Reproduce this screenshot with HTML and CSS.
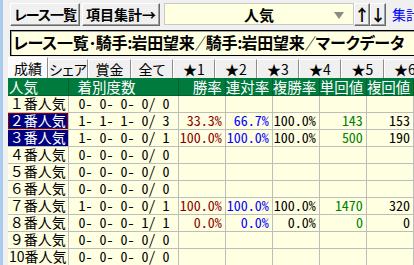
FILE: index.html
```html
<!DOCTYPE html>
<html lang="ja">
<head>
<meta charset="utf-8">
<link rel="stylesheet" href="styles.css">
</head>
<body>
<div class="win">
  <div class="edge"></div>
  <div class="main">
    <div class="toolbar">
      <div class="btn btn-race">レース一覧</div>
      <div class="btn btn-item">項目集計→</div>
      <div class="combo">
        <span class="combo-text">人気</span>
        <svg class="combo-arrow" width="10" height="7" viewBox="0 0 10 7"><polygon points="0,0 10,0 5,7" fill="#8a8a8a"/></svg>
      </div>
      <div class="btn btn-arrow">↑</div>
      <div class="btn btn-arrow">↓</div>
      <span class="link">集計</span>
    </div>
    <div class="title">レース一覧<span class="narrow">･</span>騎手<span class="narrow">:</span>岩田望来<span class="slash">／</span>騎手<span class="narrow">:</span>岩田望来<span class="slash">／</span>マークデータ</div>
    <div class="tabs">
      <div class="tab tab-active">成績</div>
      <div class="tab">シェア</div>
      <div class="tab w43">賞金</div>
      <div class="tab w42">全て</div>
      <div class="tab w42">★1</div>
      <div class="tab w42">★2</div>
      <div class="tab w42">★3</div>
      <div class="tab w42">★4</div>
      <div class="tab w43">★5</div>
      <div class="tab w42">★6</div>
    </div>
    <table class="grid">
      <colgroup>
        <col class="c-name"><col class="c-count"><col class="c-num"><col class="c-num"><col class="c-num"><col class="c-num"><col class="c-num">
      </colgroup>
      <thead>
        <tr>
          <th class="h-left">人気</th>
          <th class="h-count">着別度数</th>
          <th>勝率</th>
          <th>連対率</th>
          <th>複勝率</th>
          <th>単回値</th>
          <th>複回値</th>
        </tr>
      </thead>
      <tbody>
        <tr><td class="name">１番人気</td><td class="count">0- 0- 0- 0/ 0</td><td></td><td></td><td></td><td></td><td></td></tr>
        <tr><td class="name sel focus">２番人気</td><td class="count">1- 1- 1- 0/ 3</td><td class="num red">33.3%</td><td class="num blue">66.7%</td><td class="num">100.0%</td><td class="num green">143</td><td class="num">153</td></tr>
        <tr><td class="name sel">３番人気</td><td class="count">1- 0- 0- 0/ 1</td><td class="num red">100.0%</td><td class="num blue">100.0%</td><td class="num">100.0%</td><td class="num green">500</td><td class="num">190</td></tr>
        <tr><td class="name">４番人気</td><td class="count">0- 0- 0- 0/ 0</td><td></td><td></td><td></td><td></td><td></td></tr>
        <tr><td class="name">５番人気</td><td class="count">0- 0- 0- 0/ 0</td><td></td><td></td><td></td><td></td><td></td></tr>
        <tr><td class="name">６番人気</td><td class="count">0- 0- 0- 0/ 0</td><td></td><td></td><td></td><td></td><td></td></tr>
        <tr><td class="name">７番人気</td><td class="count">1- 0- 0- 0/ 1</td><td class="num red">100.0%</td><td class="num blue">100.0%</td><td class="num">100.0%</td><td class="num green">1470</td><td class="num">320</td></tr>
        <tr><td class="name">８番人気</td><td class="count">0- 0- 0- 1/ 1</td><td class="num red">0.0%</td><td class="num blue">0.0%</td><td class="num">0.0%</td><td class="num green">0</td><td class="num">0</td></tr>
        <tr><td class="name">９番人気</td><td class="count">0- 0- 0- 0/ 0</td><td></td><td></td><td></td><td></td><td></td></tr>
        <tr><td class="name">10番人気</td><td class="count">0- 0- 0- 0/ 0</td><td></td><td></td><td></td><td></td><td></td></tr>
      </tbody>
    </table>
  </div>
</div>
</body>
</html>
```

FILE: styles.css
```css
* { box-sizing: border-box; }
html, body {
  margin: 0;
  padding: 0;
  width: 414px;
  height: 265px;
  overflow: hidden;
  background: #f0f0f0;
  font-family: "Noto Sans CJK JP", "Noto Sans", sans-serif;
  color: #000;
}
.win { display: flex; height: 265px; }
.edge { width: 3px; flex: none; background: #a9cbee; }
.main { flex: 1; min-width: 0; padding-left: 5px; overflow: hidden; }

.toolbar {
  display: flex;
  align-items: center;
  height: 24px;
  margin-top: 2px;
  padding-left: 2px;
  white-space: nowrap;
}
.btn {
  height: 23px;
  display: flex;
  align-items: center;
  justify-content: center;
  background: #f0f0f0;
  border: 1px solid;
  border-color: #ffffff #696969 #696969 #ffffff;
  box-shadow: inset -1px -1px 0 #a0a0a0;
  font-size: 14px;
  font-weight: bold;
  font-feature-settings: "palt";
  flex: none;
  line-height: 1;
}
.btn-race { width: 70px; margin-right: 2px; letter-spacing: -1px; }
.btn-item { width: 78px; margin-right: 4px; }
.btn-arrow { width: 16px; font-size: 16px; font-weight: bold; }
.combo {
  width: 190px;
  height: 22px;
  flex: none;
  position: relative;
  display: flex;
  align-items: center;
  justify-content: center;
  background: #ffffe1;
  border: 1px solid #c8c8c8;
}
.combo-text { font-size: 15px; font-weight: bold; }
.combo-arrow { position: absolute; right: 9px; top: 8px; }
.link { color: #0000ff; font-size: 14px; margin-left: 6px; }

.title {
  margin-top: 4px;
  margin-left: 2px;
  height: 26px;
  width: 420px;
  background: #ffffe1;
  border: 1px solid #000;
  box-shadow: inset 1px 1px 0 #a0a0a0;
  font-size: 16px;
  font-weight: bold;
  line-height: 23px;
  padding-left: 2px;
  white-space: nowrap;
  overflow: hidden;
  font-feature-settings: "palt";
  letter-spacing: -0.2px;
}
.title .slash {
  display: inline-block;
  width: 11px;
  vertical-align: top;
  letter-spacing: 0;
  transform: scaleX(0.68);
  transform-origin: 0 50%;
}
.title .narrow { letter-spacing: -1px; }

.tabs {
  display: flex;
  height: 21px;
  margin-top: 1px;
  align-items: flex-end;
  white-space: nowrap;
}
.tab {
  width: 40px;
  height: 19px;
  flex: none;
  display: flex;
  align-items: center;
  justify-content: center;
  font-size: 14px;
  border-left: 1px solid #ffffff;
  border-right: 1px solid #8c8c8c;
  border-top: 1px solid #ffffff;
  background: #f0f0f0;
  font-feature-settings: "palt";
  line-height: 1;
}
.tab-active { height: 21px; background: #fafafa; }
.w42 { width: 42px; }
.w43 { width: 43px; }

.grid {
  border-collapse: collapse;
  table-layout: fixed;
  width: 406px;
  font-size: 14px;
  background: #ffffe1;
}
.c-name { width: 60px; }
.c-count { width: 110px; }
.c-num { width: 47px; }
.grid th, .grid td {
  height: 17px;
  padding: 0 3px 0 0;
  border: 1px solid #bdbdbd;
  line-height: 15px;
  white-space: nowrap;
}
.grid th {
  background: #007a3d;
  color: #fff;
  font-weight: normal;
  font-size: 14.5px;
  text-align: right;
  border-color: #00602f;
  border-top: none;
  border-left-color: #e0e0e0;
}
.grid th.h-left { text-align: left; padding-left: 1px; border-left: none; }
.grid th.h-count { text-align: left; padding-left: 9px; }
.grid td.name {
  text-align: center;
  padding: 0;
  border-left: none;
}
.grid td.count {
  white-space: pre;
  padding-left: 10px;
  font-feature-settings: "hwid";
}
.grid td.num {
  text-align: right;
  font-feature-settings: "hwid";
}
.grid td.sel { background: #000080; color: #fff; }
.grid td.focus { box-shadow: inset 0 0 0 1px #8b0000; }
.red { color: #8b0000; }
.blue { color: #0000ff; }
.green { color: #008000; }
```
